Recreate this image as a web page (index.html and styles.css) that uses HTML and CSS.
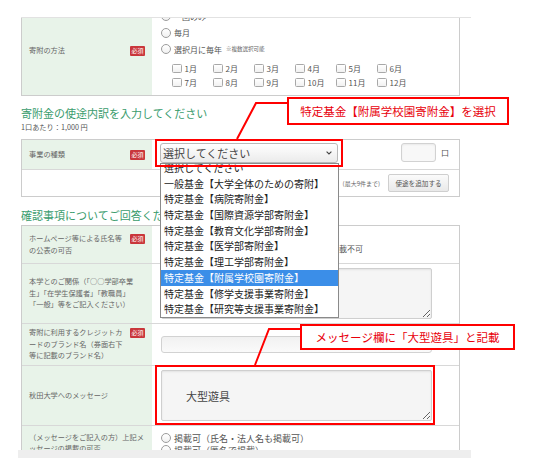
FILE: index.html
```html
<!DOCTYPE html>
<html lang="ja">
<head>
<meta charset="utf-8">
<title>寄附申込フォーム</title>
<link rel="stylesheet" href="styles.css">
</head>
<body>
<div class="frame">
  <div class="viewport">
    <div class="content">
      <div class="tbl">
        <div class="row">
          <div class="lbl"><div class="lbl-in"><span class="lt">寄附の方法</span><span class="req">必須</span></div></div>
          <div class="val method">
            <div class="opt"><span class="radio"></span>一回のみ</div>
            <div class="opt"><span class="radio"></span>毎月</div>
            <div class="opt"><span class="radio"></span>選択月に毎年<span class="note">※複数選択可能</span></div>
            <div class="months">
              <span class="mi"><span class="chk"></span>1月</span>
              <span class="mi"><span class="chk"></span>2月</span>
              <span class="mi"><span class="chk"></span>3月</span>
              <span class="mi"><span class="chk"></span>4月</span>
              <span class="mi"><span class="chk"></span>5月</span>
              <span class="mi"><span class="chk"></span>6月</span>
              <span class="mi"><span class="chk"></span>7月</span>
              <span class="mi"><span class="chk"></span>8月</span>
              <span class="mi"><span class="chk"></span>9月</span>
              <span class="mi"><span class="chk"></span>10月</span>
              <span class="mi"><span class="chk"></span>11月</span>
              <span class="mi"><span class="chk"></span>12月</span>
            </div>
          </div>
        </div>
      </div>

      <h2 class="sec">寄附金の使途内訳を入力してください</h2>
      <p class="unit">1口あたり：1,000 円</p>

      <div class="tbl">
        <div class="row">
          <div class="lbl"><div class="lbl-in"><span class="lt">事業の種類</span><span class="req">必須</span></div></div>
          <div class="val kind">
            <div class="select"><span>選択してください</span><svg width="6" height="4" viewBox="0 0 6 4"><path d="M0.6 0.6 L3 3 L5.4 0.6" stroke="#444" stroke-width="1.1" fill="none"/></svg></div>
            <div class="qty"><span class="qty-box"></span><span class="qty-unit">口</span></div>
          </div>
        </div>
        <div class="row">
          <div class="add">
            <span class="max">(最大9件まで)</span>
            <span class="btn">使途を追加する</span>
          </div>
        </div>
      </div>

      <h2 class="sec sec2">確認事項についてご回答ください</h2>

      <div class="tbl">
        <div class="row">
          <div class="lbl"><div class="lbl-in"><span class="lt">ホームページ等による氏名等<br>の公表の可否</span><span class="req">必須</span></div></div>
          <div class="val pub">
            <div class="line"><span class="opt-i o1"><span class="radio"></span>掲載可（氏名・法人名も掲載可）</span><span class="opt-i"><span class="radio"></span>掲載不可</span></div>
          </div>
        </div>
        <div class="row">
          <div class="lbl"><div class="lbl-in"><span class="lt">本学とのご関係（「○○学部卒業<br>生」「在学生保護者」「教職員」<br>「一般」等をご記入ください）</span></div></div>
          <div class="val ta"><textarea readonly></textarea></div>
        </div>
        <div class="row">
          <div class="lbl"><div class="lbl-in"><span class="lt">寄附に利用するクレジットカ<br>ードのブランド名（券面右下<br>等に記載のブランド名）</span><span class="req">必須</span></div></div>
          <div class="val brand"><div class="text-in"></div></div>
        </div>
        <div class="row">
          <div class="lbl"><div class="lbl-in"><span class="lt">秋田大学へのメッセージ</span></div></div>
          <div class="val ta"><textarea class="msg" readonly>大型遊具</textarea></div>
        </div>
        <div class="row">
          <div class="lbl top"><div class="lbl-in"><span class="lt">（メッセージをご記入の方）上記メ<br>ッセージの掲載の可否</span></div></div>
          <div class="val last">
            <div class="line big"><span class="radio"></span>掲載可（氏名・法人名も掲載可）</div>
            <div class="line big"><span class="radio"></span>掲載可（匿名で掲載）</div>
            <div class="line big"><span class="radio"></span>掲載不可</div>
          </div>
        </div>
      </div>
    </div>
  </div>
  <div class="hscroll"></div>
</div>

<div class="dropdown">
  <ul>
    <li>選択してください</li>
    <li>一般基金【大学全体のための寄附】</li>
    <li>特定基金【病院寄附金】</li>
    <li>特定基金【国際資源学部寄附金】</li>
    <li>特定基金【教育文化学部寄附金】</li>
    <li>特定基金【医学部寄附金】</li>
    <li>特定基金【理工学部寄附金】</li>
    <li class="sel">特定基金【附属学校園寄附金】</li>
    <li>特定基金【修学支援事業寄附金】</li>
    <li>特定基金【研究等支援事業寄附金】</li>
  </ul>
</div>

<svg class="marks" width="541" height="473" viewBox="0 0 541 473">
  <rect x="156" y="140" width="186" height="26" fill="none" stroke="#ff0000" stroke-width="2"/>
  <rect x="156" y="366" width="278" height="58" fill="none" stroke="#ff0000" stroke-width="2"/>
  <polyline points="287,103 256,103 237,139" fill="none" stroke="#ff0000" stroke-width="2"/>
  <polyline points="300,329 269,329 255,365" fill="none" stroke="#ff0000" stroke-width="2"/>
</svg>

<div class="callout c1">特定基金【附属学校園寄附金】を選択</div>
<div class="callout c2">メッセージ欄に「大型遊具」と記載</div>
</body>
</html>
```

FILE: styles.css
```css
* { box-sizing: border-box; }
html, body { margin: 0; padding: 0; background: #fff; }
body {
  position: relative;
  width: 541px;
  height: 473px;
  overflow: hidden;
  font-family: "Noto Sans CJK JP", "Noto Sans", sans-serif;
  color: #555;
}

.frame { margin: 17px 0 0 18px; width: 453px; }
.viewport {
  margin-left: 3px;
  width: 450px;
  height: 433px;
  overflow: hidden;
  border-top: 1px solid #e2e2e2;
}
.content { margin-top: -13px; }
.hscroll { height: 8px; background: #eeeeee; }

.tbl { width: 439px; border: 1px solid #cccccc; }
.row { display: grid; grid-template-columns: 130px 1fr; }
.row + .row { border-top: 1px solid #d8d8d8; }

.lbl {
  background: #e8f3e9;
  display: flex;
  align-items: center;
  padding: 0 7px;
}
.lbl.top { align-items: flex-start; padding-top: 5.5px; }
.lbl-in { display: flex; align-items: flex-start; justify-content: space-between; width: 100%; }
.lt { font-size: 7.2px; line-height: 11.5px; color: #666; white-space: nowrap; }
.req {
  flex: none;
  width: 15px;
  margin-top: 1px;
  background: #c9363b;
  color: #fff;
  font-size: 6px;
  line-height: 10px;
  text-align: center;
  border-radius: 1px;
}

.val { background: #fff; }

.radio {
  flex: none;
  width: 10px;
  height: 10px;
  margin-right: 3px;
  border: 1px solid #9c9c9c;
  border-radius: 50%;
  background: linear-gradient(#ffffff, #f1f1f1);
}
.chk {
  flex: none;
  width: 9.5px;
  height: 9.5px;
  margin-right: 3px;
  border: 1px solid #a8a8a8;
  border-radius: 1.5px;
  background: linear-gradient(#ffffff, #f1f1f1);
}

.method { padding: 2px 0 5.5px 9px; }
.opt { display: flex; align-items: center; height: 16.5px; font-size: 8px; color: #555; }
.note { font-size: 5.5px; margin-left: 4px; color: #666; }
.months {
  display: grid;
  grid-template-columns: repeat(6, 41px);
  grid-auto-rows: 14px;
  margin: 4px 0 0 11px;
}
.mi { display: flex; align-items: center; font-size: 8px; color: #555; }

.sec { margin: 9px 0 0; font-size: 11px; line-height: 16px; font-weight: 400; color: #3a9c6d; }
.sec2 { margin: 10px 0 2px; }
.unit { margin: 0 0 6px; font-size: 7.2px; line-height: 12px; color: #555; }

.kind { display: flex; align-items: flex-start; height: 29px; padding: 3px 10px 0 8px; }
.select {
  width: 178px;
  height: 20px;
  display: flex;
  align-items: center;
  justify-content: space-between;
  padding: 0 5px 0 2px;
  border: 1px solid #b9b9b9;
  border-radius: 3px;
  background: linear-gradient(#ffffff, #ebebeb);
  font-size: 11px;
  color: #444;
}
.qty { margin-left: auto; display: flex; align-items: center; gap: 5px; }
.qty-box {
  width: 35px;
  height: 19px;
  border: 1px solid #d2d2d2;
  border-radius: 3px;
  background: #f8f8f8;
  box-shadow: inset 0 1px 2px rgba(0, 0, 0, 0.06);
}
.qty-unit { font-size: 8px; line-height: 19px; color: #555; }

.add {
  grid-column: 1 / -1;
  display: flex;
  justify-content: flex-end;
  align-items: center;
  gap: 8px;
  height: 26px;
  padding-right: 10px;
}
.max { font-size: 6px; color: #666; }
.btn {
  width: 61px;
  height: 18px;
  display: flex;
  align-items: center;
  justify-content: center;
  border: 1px solid #cfcfcf;
  border-radius: 2px;
  background: linear-gradient(#fbfbfb, #e9e9e9);
  font-size: 6.6px;
  color: #555;
}

.line { display: flex; align-items: center; height: 12px; font-size: 8px; color: #555; white-space: nowrap; }
.line.big { font-size: 9px; }
.pub { padding: 16px 0 9px 9px; }
.opt-i { display: flex; align-items: center; }
.o1 { margin-right: 24px; }

.ta { padding: 4px 0 4px 9px; }
textarea {
  display: block;
  width: 271px;
  height: 51px;
  margin: 0;
  padding: 2px 4px;
  border: 1px solid #cfcfcf;
  border-radius: 2px;
  background: #f5f5f5;
  box-shadow: inset 0 1px 2px rgba(0, 0, 0, 0.08);
  font-family: "Noto Sans CJK JP", sans-serif;
  font-size: 11px;
  line-height: 16px;
  color: #444;
  resize: both;
  outline: none;
}
textarea.msg { padding: 17px 24px 0; }

.brand { padding: 12px 0 12px 9px; }
.text-in {
  width: 271px;
  height: 17px;
  border: 1px solid #d2d2d2;
  border-radius: 3px;
  background: linear-gradient(#f1f1f1, #fafafa);
}

.last { padding: 6px 0 0 9px; }

.dropdown {
  position: absolute;
  left: 160px;
  top: 163px;
  width: 179px;
  height: 155px;
  border: 1px solid #8a8a8a;
  background: #fff;
  overflow: hidden;
  font-size: 10px;
  color: #222;
}
.dropdown ul { margin: -4px 0 0; padding: 0; list-style: none; }
.dropdown li { height: 15.7px; line-height: 15.7px; padding-left: 3px; white-space: nowrap; }
.dropdown li.sel { background: #3b8ee8; color: #fff; }

.marks { position: absolute; left: 0; top: 0; pointer-events: none; }

.callout {
  position: absolute;
  display: flex;
  align-items: center;
  justify-content: center;
  border: 2px solid #ff0000;
  background: #fff;
  color: #e8000b;
  font-size: 11.5px;
  white-space: nowrap;
}
.c1 { left: 287px; top: 97px; width: 222px; height: 28px; }
.c2 { left: 300px; top: 324px; width: 215px; height: 26px; }
```
